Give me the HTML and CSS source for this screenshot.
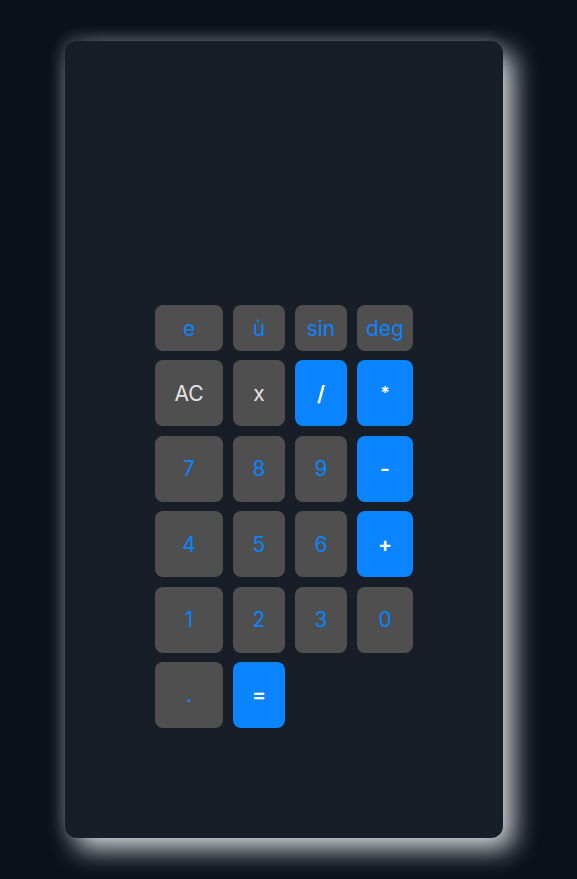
FILE: index.html
```html
<!DOCTYPE html>
<html>
<head>
<meta charset="utf-8">
<link rel="stylesheet" href="styles.css">
</head>
<body>
<div class="card">
  <div class="keys">
    <button class="key small">e</button>
    <button class="key small">ù</button>
    <button class="key small">sin</button>
    <button class="key small">deg</button>
    <button class="key light">AC</button>
    <button class="key light">x</button>
    <button class="key op">/</button>
    <button class="key op star">*</button>
    <button class="key">7</button>
    <button class="key">8</button>
    <button class="key">9</button>
    <button class="key op">-</button>
    <button class="key">4</button>
    <button class="key">5</button>
    <button class="key">6</button>
    <button class="key op">+</button>
    <button class="key">1</button>
    <button class="key">2</button>
    <button class="key">3</button>
    <button class="key">0</button>
    <button class="key">.</button>
    <button class="key op">=</button>
  </div>
</div>
</body>
</html>
```
FILE: styles.css
```css
html, body {
  margin: 0;
  padding: 0;
  background: #0b111b;
  height: 100%;
}
body {
  padding: 41px 0 0 65px;
  box-sizing: border-box;
}
.card {
  width: 438px;
  height: 797px;
  background: #181e27;
  border-radius: 12px;
  box-shadow: 10px 11px 26px #d4d8dc, -4px -4px 14px rgba(200,210,220,0.16);
  box-sizing: border-box;
  padding-top: 264px;
  display: flex;
  justify-content: center;
  align-items: flex-start;
}
.keys {
  display: grid;
  grid-template-columns: 68px 52px 52px 56px;
  grid-template-rows: 46px 66px 66px 66px 66px 66px;
  column-gap: 10px;
  row-gap: 9.4px;
}
.key {
  border: none;
  margin: 0;
  padding: 0;
  border-radius: 8px;
  background: #4f4f4f;
  color: #0a84ff;
  font-family: Inter, "Liberation Sans", sans-serif;
  font-size: 21px;
  font-weight: 400;
  display: flex;
  align-items: center;
  justify-content: center;
}
.key.light {
  color: #e4e4e4;
}
.key.op {
  background: #0a84ff;
  color: #ffffff;
  font-weight: 600;
}
.key.star {
  font-size: 17px;
}
```
